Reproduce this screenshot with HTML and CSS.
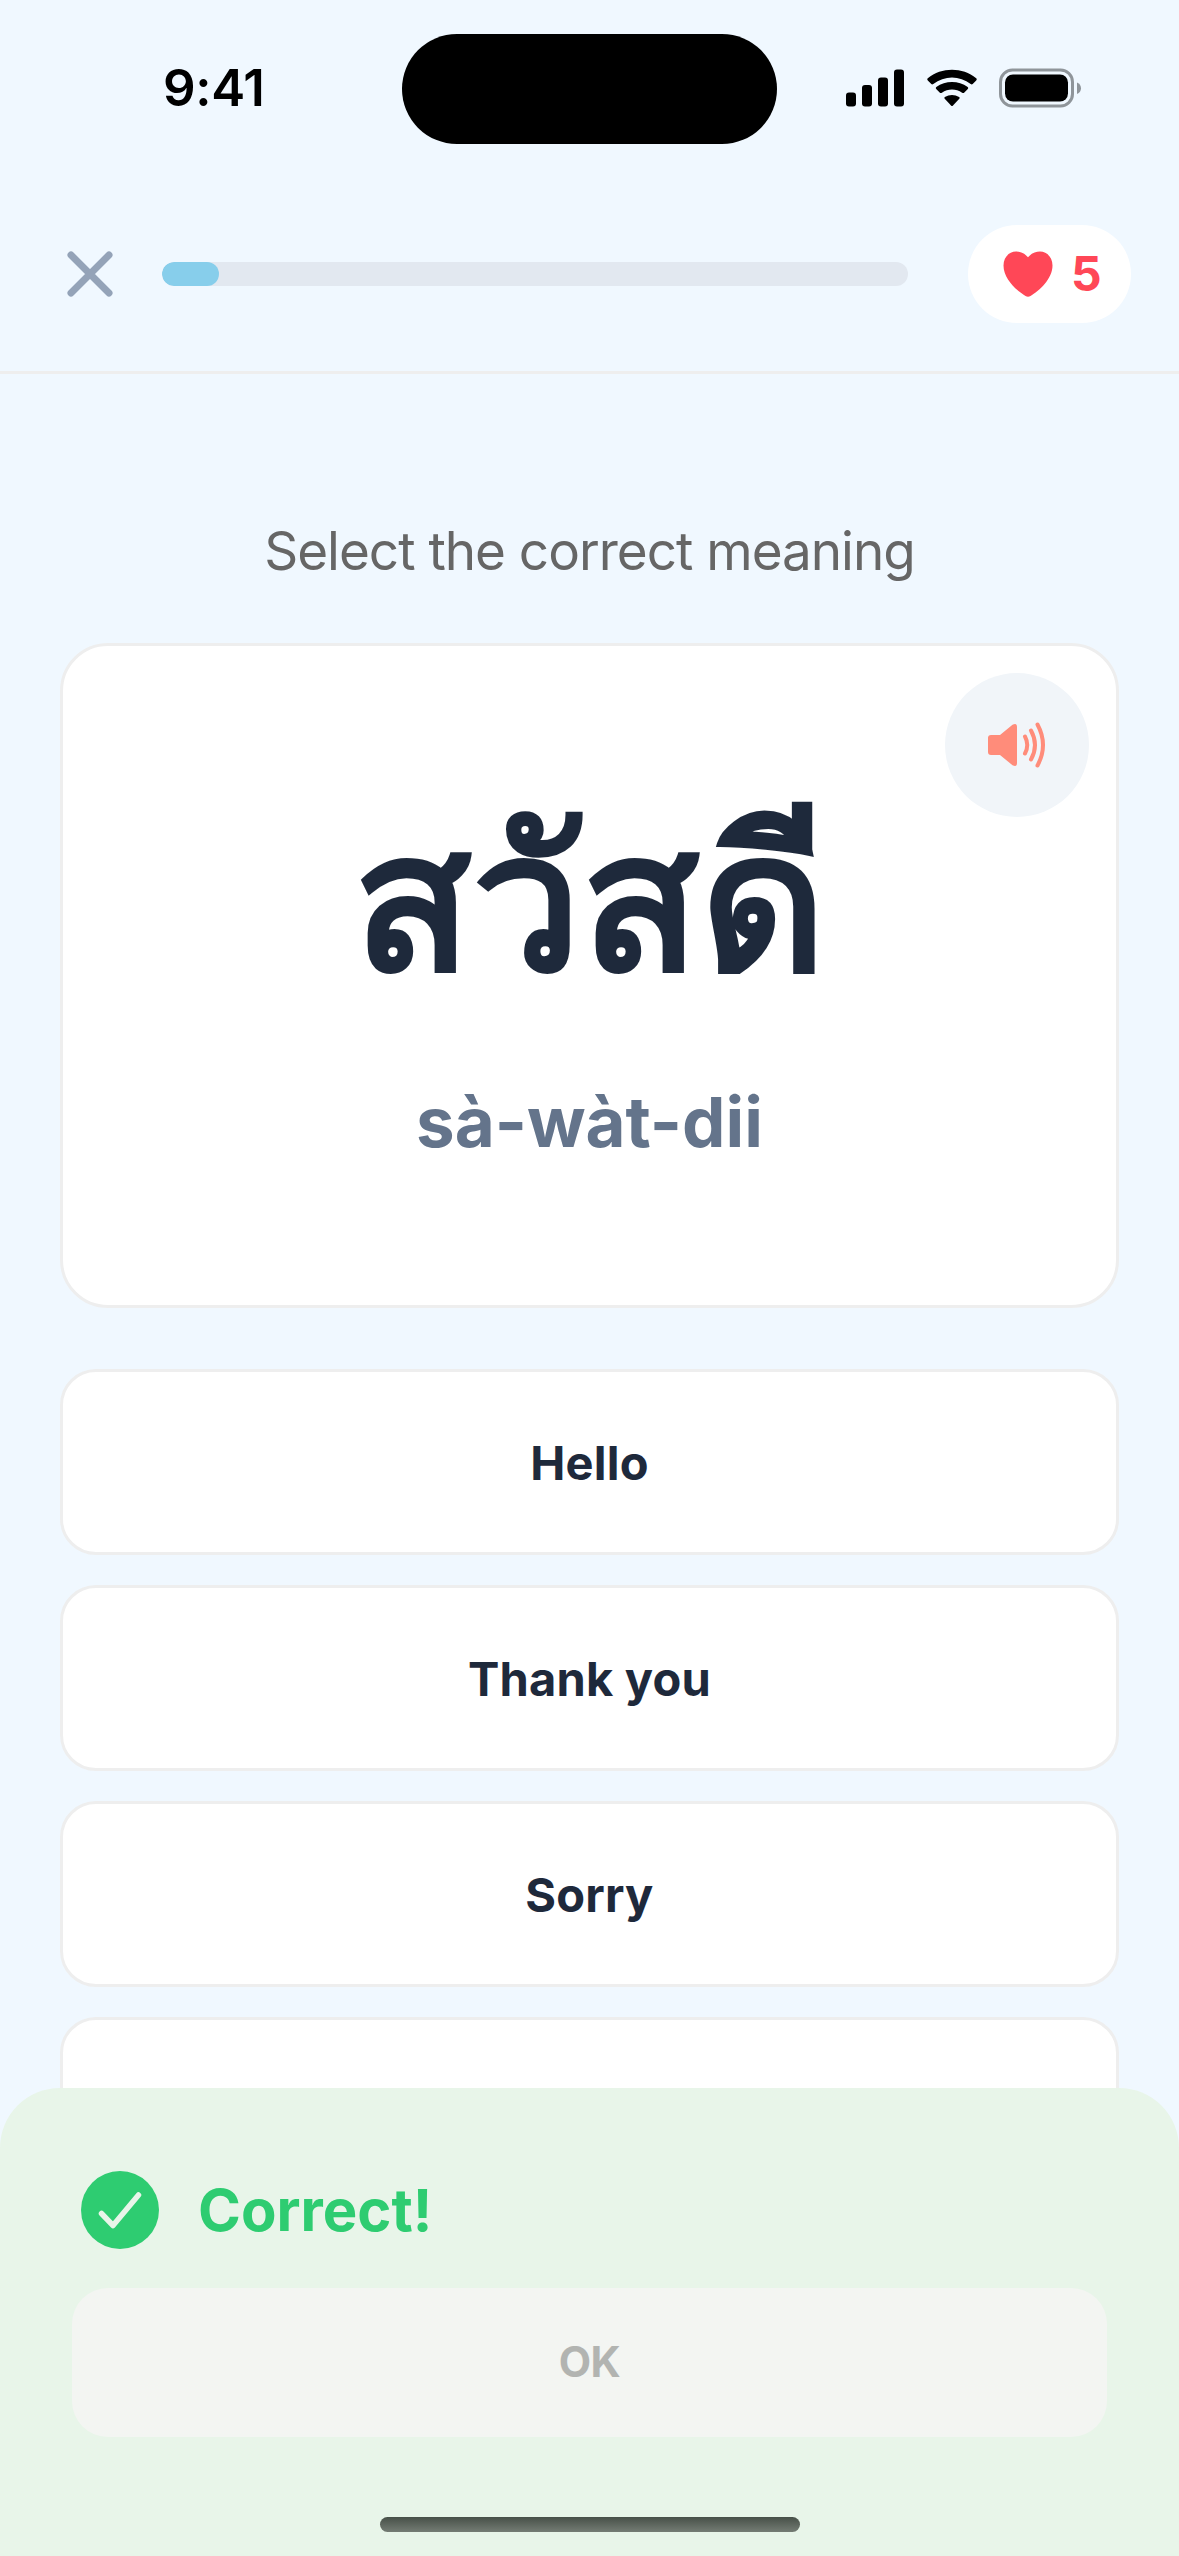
FILE: index.html
```html
<!DOCTYPE html>
<html lang="en">
<head>
<meta charset="utf-8">
<meta name="viewport" content="width=device-width">
<title>Lesson</title>
<link rel="stylesheet" href="styles.css">
</head>
<body>
<div class="screen">
  <div class="status">
    <div class="status-side status-left"><span class="time">9:41</span></div>
    <div class="island"></div>
    <div class="status-side status-right">
      <svg class="signal" width="58" height="38" viewBox="0 0 58 38"><rect x="0" y="23.500" width="10" height="14" rx="3"/><rect x="16" y="16" width="10" height="21.500" rx="3"/><rect x="32" y="8.500" width="10" height="29" rx="3"/><rect x="48" y="0.500" width="10" height="37" rx="3"/></svg>
      <svg class="wifi" width="50" height="38" viewBox="0 0 50 38"><path d="M0.800 11.400Q-.3 10.300.8 9.200C14.500-2.100 35.500-2.100 49.200 9.200Q50.300 10.300 49.200 11.400L45.700 15Q44.800 15.900 43.700 15C32.700 6.300 17.300 6.300 6.300 15Q5.200 15.900 4.300 15Z"/><path d="M9.200 20Q8.200 19 9.300 18C18.500 11.200 31.500 11.200 40.700 18Q41.800 19 40.800 20L37.100 23.700Q36.200 24.500 35.100 23.700C29.100 19.400 20.900 19.400 14.900 23.700Q13.800 24.500 12.900 23.700Z"/><path d="M17.700 28.700Q16.800 27.700 17.900 26.900C22.300 24.200 27.700 24.200 32.100 26.900Q33.200 27.700 32.300 28.700L26 35.600Q25 36.600 24 35.600Z" transform="translate(0 1)"/></svg>
      <svg class="battery" width="83" height="40" viewBox="0 0 83 40"><rect x="1.500" y="2" width="72" height="36" rx="12" fill="none" stroke="#8f959a" stroke-width="3"/><rect x="6" y="6.500" width="63" height="27" rx="8"/><path d="M78 14.500c5.300 2 5.300 9.500 0 11.500z" fill="#8f959a"/></svg>
    </div>
  </div>
  <header class="topbar">
    <svg class="close" width="46" height="46" viewBox="0 0 46 46"><path d="M4 4L42 42M42 4L4 42" fill="none" stroke="#94a3b8" stroke-width="7" stroke-linecap="round"/></svg>
    <div class="track"><div class="fill"></div></div>
    <div class="lives">
      <svg width="50" height="46" viewBox="0 0 50 46"><path d="M25 6.200C29 1.800 33 .5 37 .5 44 .5 49.500 6.500 49.500 14.500 49.500 28 36 40 27.500 45Q25 46.500 22.500 45C14 40 .5 28 .5 14.500.5 6.500 6 .5 13 .5 17 .5 21 1.800 25 6.200Z" fill="#ff4757"/></svg>
      <span>5</span>
    </div>
  </header>
  <main class="lesson">
    <h1 class="prompt">Select the correct meaning</h1>
    <section class="card">
      <div class="word" lang="th">สวัสดี</div>
      <div class="roman">sà-wàt-dii</div>
      <div class="sound">
        <svg width="60" height="48" viewBox="0 0 60 48"><path d="M4 14H13L25.500 3.800Q30 1.500 30 6V42Q30 46.500 25.500 44.200L13 34H4Q1 34 1 31V17Q1 14 4 14Z" fill="#ff8c7a"/><path d="M38 15.500Q42.500 24 38 32.500M44 9.500Q52 24 44 38.500M50.500 3.500Q61.500 24 50.500 44.500" fill="none" stroke="#ff8c7a" stroke-width="4" stroke-linecap="round"/></svg>
      </div>
    </section>
    <div class="options">
      <div class="option">Hello</div>
      <div class="option">Thank you</div>
      <div class="option">Sorry</div>
      <div class="option"></div>
    </div>
  </main>
  <footer class="sheet">
    <div class="result">
      <svg width="78" height="78" viewBox="0 0 78 78"><circle cx="39" cy="39" r="39" fill="#2ecc71"/><path d="M20.500 42.500L32 54.500 57.500 24" fill="none" stroke="#e8f5e9" stroke-width="5.500" stroke-linecap="round" stroke-linejoin="round"/></svg>
      <span class="verdict">Correct!</span>
    </div>
    <div class="ok"><span>OK</span></div>
    <div class="home"></div>
  </footer>
</div>
</body>
</html>
```
FILE: styles.css
```css
* { box-sizing: border-box; }
body { margin: 0; background: #f0f8ff; font-family: Inter, "Noto Sans", sans-serif; }
svg { display: block; flex: none; }
.screen { position: relative; width: 1179px; height: 2556px; overflow: hidden; background: #f0f8ff; }
.status { display: flex; height: 178px; padding-top: 34px; }
.status-side { flex: none; width: 402px; display: flex; height: 108px; align-items: center; }
.status-left { padding-left: 163px; }
.time { font-size: 51px; font-weight: 600; line-height: 60px; letter-spacing: -0.3px; }
.island { width: 375px; height: 110px; border-radius: 55px; background: #000; }
.status-right { padding-left: 69px; }
.wifi { margin-left: 23px; }
.battery { margin-left: 22px; }
.topbar { display: flex; align-items: center; height: 196px; padding: 0 48px 1px 67px; border-bottom: 3px solid #eee; }
.track { width: 746px; height: 24px; margin-left: 49px; border-radius: 12px; background: #e2e8f0; overflow: hidden; }
.fill { width: 57px; height: 24px; border-radius: 12px; background: #87ceeb; }
.lives { display: flex; align-items: center; width: 163px; height: 98px; margin-left: 60px; padding-left: 35px; gap: 18px; border-radius: 49px; background: #fff; color: #ff4757; font-size: 48px; font-weight: 700; line-height: 60px; }
.lesson { padding: 142px 60px 0; }
.prompt { margin: 0; height: 70px; color: #666; font-size: 53px; font-weight: 400; line-height: 70px; text-align: center; letter-spacing: -1px; white-space: nowrap; }
.card { position: relative; display: flex; flex-direction: column; align-items: center; height: 665px; margin-top: 57px; border: 3px solid #eee; border-radius: 48px; background: #fff; }
.word { height: 240px; margin-top: 133px; color: #1e293b; font-size: 195px; font-weight: 700; line-height: 240px; white-space: nowrap; }
.roman { height: 90px; margin-top: 58px; color: #64748b; font-size: 69px; font-weight: 700; line-height: 90px; white-space: nowrap; }
.sound { position: absolute; top: 27px; right: 27px; display: flex; align-items: center; justify-content: center; width: 144px; height: 144px; border-radius: 50%; background: #f1f5f9; }
.options { display: flex; flex-direction: column; gap: 30px; margin-top: 61px; }
.option { display: flex; align-items: center; justify-content: center; height: 186px; padding-top: 2px; border: 3px solid #eee; border-radius: 36px; background: #fff; color: #1e293b; font-size: 47px; font-weight: 700; line-height: 60px; letter-spacing: 0.2px; }
.sheet { position: absolute; left: 0; top: 2088px; width: 1179px; height: 468px; padding: 83px 72px 0; border-radius: 60px 60px 0 0; background: #e8f5e9; }
.result { display: flex; align-items: center; height: 78px; padding-left: 9px; gap: 39px; }
.verdict { color: #2ecc71; font-size: 58px; font-weight: 700; line-height: 70px; }
.ok { display: flex; align-items: center; justify-content: center; height: 149px; margin-top: 39px; padding-bottom: 1px; border-radius: 36px; background: #f3f5f2; color: #b2b4b1; font-size: 42px; font-weight: 700; line-height: 50px; letter-spacing: -0.5px; }
.home { width: 420px; height: 15px; margin: 80px auto 0; border-radius: 8px; background: linear-gradient(#475048, #747c74); }
```
